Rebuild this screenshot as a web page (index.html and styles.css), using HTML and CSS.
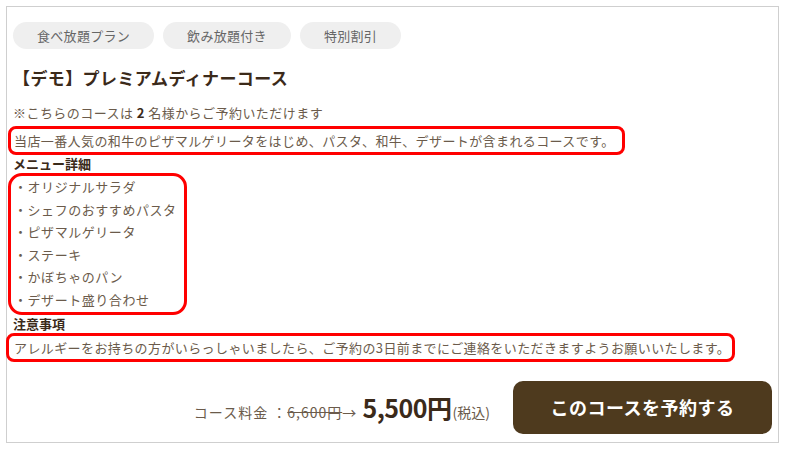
FILE: index.html
```html
<!DOCTYPE html>
<html lang="ja">
<head>
  <meta charset="UTF-8" />
  <meta name="viewport" content="width=device-width, initial-scale=1.0" />
  <title>コース詳細</title>
  <link rel="stylesheet" href="styles.css">
</head>
<body>
  <div class="course-card">
    <!-- tags -->
    <div class="course-tags">
      <span class="tag">食べ放題プラン</span>
      <span class="tag">飲み放題付き</span>
      <span class="tag">特別割引</span>
    </div>

    <h2 class="course-title">【デモ】プレミアムディナーコース</h2>
    <p class="course-note">※こちらのコースは <b>2</b> 名様からご予約いただけます</p>

    <p class="mark mark-desc">当店一番人気の和牛のピザマルゲリータをはじめ、パスタ、和牛、デザートが含まれるコースです。</p>

    <h3 class="course-sub">メニュー詳細</h3>
    <ul class="mark mark-menu">
      <li>・オリジナルサラダ</li>
      <li>・シェフのおすすめパスタ</li>
      <li>・ピザマルゲリータ</li>
      <li>・ステーキ</li>
      <li>・かぼちゃのパン</li>
      <li>・デザート盛り合わせ</li>
    </ul>

    <h3 class="course-sub">注意事項</h3>
    <p class="mark mark-notice">アレルギーをお持ちの方がいらっしゃいましたら、ご予約の3日前までにご連絡をいただきますようお願いいたします。</p>

    <!-- price + reserve -->
    <div class="course-footer">
      <div class="price">
        <span class="price-label">コース料金 ：</span><span class="price-old">6,600円</span><span class="price-arrow">→</span>
        <span class="price-now">5,500円</span><span class="price-tax">(税込)</span>
      </div>
      <button class="reserve-btn" type="button">このコースを予約する</button>
    </div>
  </div>
</body>
</html>
```

FILE: styles.css
```css
body {
  font-family: "Noto Sans CJK JP", "Noto Sans", sans-serif;
  background: #fff;
  margin: 0;
  padding: 6px;
  color: #6b5b4b;
}

.course-card {
  border: 1px solid #cfcfcf;
  padding: 15px 6px 8px 6px;
}

.course-tags {
  display: flex;
  gap: 9px;
}

.tag {
  display: inline-flex;
  align-items: center;
  height: 27px;
  padding: 0 24px;
  background: #efefef;
  border-radius: 14px;
  color: #666;
  font-size: 13px;
  letter-spacing: 0.3px;
}

.course-title {
  margin: 17px 0 0 0;
  font-size: 17px;
  line-height: 24px;
  letter-spacing: 0.4px;
  color: #3b2a1a;
}

.course-note {
  margin: 13px 0 0 0;
  font-size: 13px;
  line-height: 20px;
  letter-spacing: 0.45px;
}

.course-note b {
  color: #3b2a1a;
}

.course-sub {
  margin: 0;
  font-size: 13px;
  line-height: 18px;
  color: #3b2a1a;
}

/* red annotation frames */
.mark {
  border: 3px solid #f00;
  border-radius: 8px;
  font-size: 13px;
  line-height: 23px;
  letter-spacing: 0.4px;
}

.mark-desc {
  width: fit-content;
  margin: 3px 0 0 -5px;
  padding: 0 7px 0 3px;
}

.mark-menu {
  list-style: none;
  width: 170px;
  margin: 0 0 0 -5px;
  padding: 0 0 0 3px;
  line-height: 22.6px;
  letter-spacing: 0.55px;
  border-radius: 14px;
}

.mark-notice {
  width: fit-content;
  margin: 0 0 0 -7px;
  padding: 0 2px 0 5px;
}

.course-footer {
  display: flex;
  justify-content: flex-end;
  align-items: center;
  gap: 23px;
  margin-top: 19px;
}

.price {
  font-size: 14px;
  letter-spacing: 1px;
  white-space: nowrap;
}

.price-old {
  text-decoration: line-through;
}

.price-arrow {
  letter-spacing: 0;
}

.price-now {
  font-size: 25px;
  font-weight: bold;
  color: #3b2a1a;
  margin-left: 2px;
  letter-spacing: -0.5px;
}

.price-tax {
  font-size: 14px;
  letter-spacing: 0;
  margin-left: 1px;
}

.reserve-btn {
  width: 259px;
  height: 53px;
  background: #4e3a1e;
  color: #fff;
  border: none;
  border-radius: 10px;
  font-family: inherit;
  font-size: 18px;
  font-weight: bold;
  letter-spacing: 0.5px;
  cursor: pointer;
}
```
